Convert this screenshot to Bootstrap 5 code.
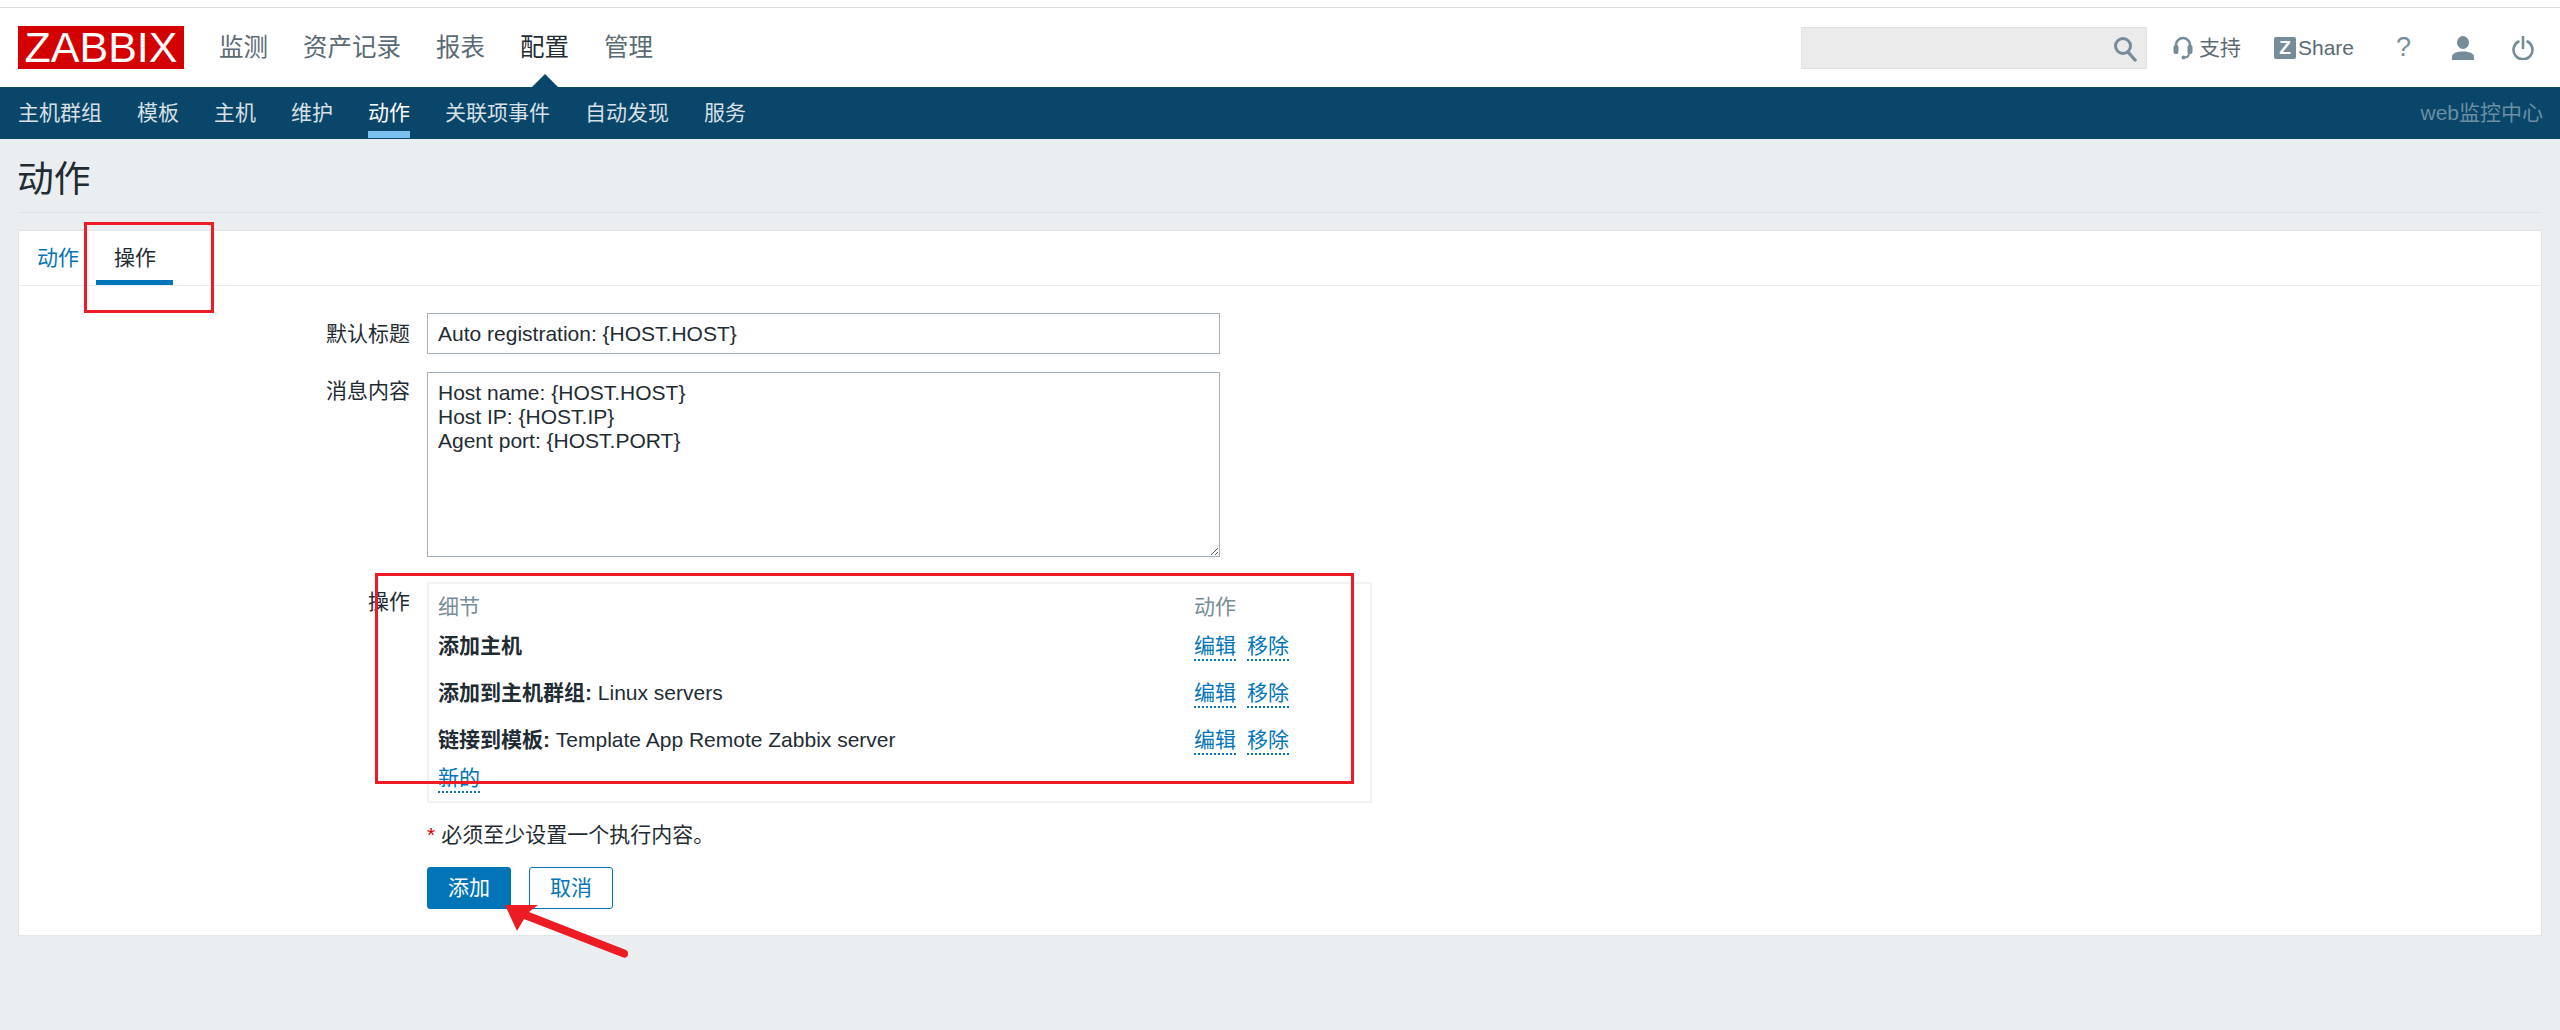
<!DOCTYPE html>
<html lang="zh-CN">
<head>
<meta charset="utf-8">
<title>动作</title>
<link href="https://cdn.jsdelivr.net/npm/bootstrap@5.3.0/dist/css/bootstrap.min.css" rel="stylesheet">
<style>
html,body{height:100%;}
body{background:#ebeef0;color:#1f2c33;font-family:"Liberation Sans","Noto Sans CJK SC",sans-serif;font-size:21px;line-height:24px;position:relative;overflow:hidden;}
a{text-decoration:none;color:#0275b8;}
.topline{height:8px;background:#fff;border-bottom:1px solid #ddd;}
.mainbar{height:79px;background:#fff;padding:18px 26px 0 18px;position:relative;}
.zlogo{width:166px;height:43px;background:#d40000;color:#fff;font-size:43px;line-height:43px;text-align:center;}
.mainnav{margin-left:35px;gap:35px;}
.mainnav a{font-size:24.5px;line-height:43px;color:#5b6b75;}
.mainnav a.cur{color:#1f2c33;}
.caret-up{position:absolute;left:532px;bottom:0;width:0;height:0;border-left:13px solid transparent;border-right:13px solid transparent;border-bottom:13px solid #0a466a;}
.searchbox{width:346px;height:42px;background:#ebebeb;border:1px solid #e2e2e2;position:relative;}
.searchbox svg{position:absolute;right:9px;top:8px;}
.tools{color:#5b6b75;height:43px;}
.tools span{line-height:43px;}
.t1{margin-left:26px;}
.t1 .g1{margin-left:6px;}
.t2{margin-left:33px;}
.t3{margin-left:42px;font-size:27px;width:12px;text-align:center;}
.t4{margin-left:44px;}
.t5{margin-left:38px;}
.tools .zmark{width:22px;height:22px;background:#768d99;color:#fff;border-radius:2px;font-size:19px;line-height:22px;font-weight:700;text-align:center;margin-right:2px;}
.subbar{height:52px;background:#0a466a;padding:0 17px 0 18px;}
.subnav{gap:35px;}
.subnav a{font-size:21px;height:52px;line-height:51px;color:#d6e0e6;position:relative;display:block;}
.subnav a.cur{color:#fff;}
.subnav a.cur::after{content:"";position:absolute;left:0;right:0;top:44px;height:7px;background:#7cc0f0;}
.brandtxt{color:#6b8ea3;line-height:51px;}
.titlebar{height:74px;margin:0 18px;border-bottom:1px solid #dfe3e6;}
.titlebar h1{font-size:36.75px;line-height:42px;font-weight:400;margin:0 0 0 -1px;padding-top:20px;color:#1f2c33;}
.panel{margin:17px 18px 0;height:706px;background:#fff;border:1px solid #e3e6e8;}
.tabstrip{height:55px;border-bottom:1px solid #ebeef0;padding-left:18px;gap:35px;}
.tabstrip a{height:54px;line-height:54px;display:block;position:relative;}
.tabstrip a.cur{color:#1f2c33;}
.tabstrip a.cur::after{content:"";position:absolute;left:-18px;right:-17px;top:49px;height:5px;background:#0275b8;}
.formarea{padding-top:27px;}
.frow{display:flex;}
.flabel{width:408px;text-align:right;padding-right:17px;flex:none;}
.fin{width:793px;height:41px;border:1px solid #a4b1b9;border-radius:0;font-size:21px;line-height:24px;padding:7px 10px;color:#1f2c33;font-family:inherit;box-shadow:none;}
.farea{height:185px;padding:8px 10px;resize:both;}
.opsbox{width:945px;height:221px;border:2px solid #f0f2f3;padding:11px 9px;}
.opstable{margin:0;width:100%;font-size:21px;}
.opstable td,.opstable th{padding:0;border:0;background:transparent;color:#1f2c33;font-weight:400;vertical-align:top;box-shadow:none;}
.opstable th{color:#768d99;height:39px;}
.opstable td{height:47px;}
.opstable b{font-weight:700;}
.colact{width:167px;}
.dotlink{border-bottom:2px dotted #0275b8;padding-bottom:1px;display:inline-block;line-height:24px;}
.dotlink + .dotlink{margin-left:11px;}
.notice{margin:20px 0 20px 408px;line-height:24px;}
.notice i{color:#d40000;font-style:normal;margin-right:6px;}
.btnrow{margin-left:408px;}
.zbtn{width:84px;height:42px;font-size:21px;line-height:24px;padding:8px 0;border-radius:3px;}
.zbtn-main{background:#0275b8;border:1px solid #0275b8;color:#fff;}
.zbtn-ghost{background:#fff;border:1px solid #0275b8;color:#0275b8;margin-left:18px;}
.redbox{position:absolute;border:3px solid #ed1c24;pointer-events:none;}
.rb1{left:84px;top:222px;width:130px;height:91px;}
.rb2{left:375px;top:573px;width:979px;height:211px;}
.redarrow{position:absolute;left:490px;top:890px;}
.g1{color:#5b6b75;}
.g2{color:#768d99;}
.gap18{margin-bottom:18px;}
.gap25{margin-bottom:25px;}
.lb41{line-height:41px;}
.pt7{padding-top:7px;}
.pt8{padding-top:8px;}
.opstable td.h38{height:38px;}
</style>
</head>
<body>
<div class="topline"></div>
<header class="mainbar d-flex justify-content-between">
  <div class="d-flex">
    <a class="zlogo d-block" href="#">ZABBIX</a>
    <nav class="mainnav d-flex">
      <a href="#">监测</a><a href="#">资产记录</a><a href="#">报表</a><a class="cur" href="#">配置</a><a href="#">管理</a>
    </nav>
  </div>
  <span class="caret-up"></span>
  <div class="tools d-flex align-items-center">
    <div class="searchbox">
      <svg width="24" height="26" viewBox="0 0 24 26"><circle cx="10" cy="10" r="7.5" fill="none" stroke="#768d99" stroke-width="3"/><path d="M15 16l7 8" stroke="#768d99" stroke-width="3.4" stroke-linecap="round"/></svg>
    </div>
    <a class="t1 d-flex align-items-center" href="#">
      <svg width="20" height="32" viewBox="0 0 20 32"><path d="M3 17v-4a7 7 0 0 1 14 0v4" fill="none" stroke="#768d99" stroke-width="2.6"/><rect x="0.5" y="13" width="5" height="9" rx="2" fill="#768d99"/><rect x="14.5" y="13" width="5" height="9" rx="2" fill="#768d99"/><path d="M16 21c0 3-2 4.500-5 4.500" fill="none" stroke="#768d99" stroke-width="2"/><circle cx="10.500" cy="25.500" r="2" fill="#768d99"/></svg>
      <span class="g1">支持</span>
    </a>
    <a class="t2 d-flex align-items-center" href="#">
      <span class="zmark d-block">Z</span><span class="g1">Share</span>
    </a>
    <a class="t3 d-block" href="#"><span class="g2">?</span></a>
    <a class="t4 d-flex" href="#">
      <svg width="22" height="24" viewBox="0 0 22 24"><ellipse cx="11" cy="6.500" rx="6" ry="6.500" fill="#768d99"/><path d="M0 24v-3c0-4 5-5.500 11-5.500s11 1.500 11 5.500v3z" fill="#768d99"/></svg>
    </a>
    <a class="t5 d-flex" href="#">
      <svg width="22" height="24" viewBox="0 0 22 24"><path d="M6.500 5.500a9.500 9.500 0 1 0 9 0" fill="none" stroke="#768d99" stroke-width="2.600" stroke-linecap="round"/><path d="M11 1v11" stroke="#768d99" stroke-width="2.600" stroke-linecap="round"/></svg>
    </a>
  </div>
</header>
<div class="subbar d-flex justify-content-between">
  <nav class="subnav d-flex">
    <a href="#">主机群组</a><a href="#">模板</a><a href="#">主机</a><a href="#">维护</a><a class="cur" href="#">动作</a><a href="#">关联项事件</a><a href="#">自动发现</a><a href="#">服务</a>
  </nav>
  <div class="brandtxt">web监控中心</div>
</div>
<div class="titlebar"><h1>动作</h1></div>
<main class="panel">
  <div class="tabstrip d-flex">
    <a href="#">动作</a><a class="cur" href="#">操作</a>
  </div>
  <form class="formarea">
    <div class="frow gap18">
      <label class="flabel lb41">默认标题</label>
      <input class="form-control fin" type="text" value="Auto registration: {HOST.HOST}">
    </div>
    <div class="frow gap25">
      <label class="flabel pt7">消息内容</label>
      <textarea class="form-control fin farea">Host name: {HOST.HOST}
Host IP: {HOST.IP}
Agent port: {HOST.PORT}</textarea>
    </div>
    <div class="frow">
      <label class="flabel pt8">操作</label>
      <div class="opsbox">
        <table class="table opstable">
          <thead><tr><th>细节</th><th class="colact">动作</th></tr></thead>
          <tbody>
            <tr><td><b>添加主机</b></td><td class="colact"><a class="dotlink" href="#">编辑</a><a class="dotlink" href="#">移除</a></td></tr>
            <tr><td><b>添加到主机群组:</b> Linux servers</td><td class="colact"><a class="dotlink" href="#">编辑</a><a class="dotlink" href="#">移除</a></td></tr>
            <tr><td class="h38"><b>链接到模板:</b> Template App Remote Zabbix server</td><td class="colact h38"><a class="dotlink" href="#">编辑</a><a class="dotlink" href="#">移除</a></td></tr>
            <tr><td colspan="2"><a class="dotlink" href="#">新的</a></td></tr>
          </tbody>
        </table>
      </div>
    </div>
    <div class="notice"><i>*</i>必须至少设置一个执行内容。</div>
    <div class="btnrow d-flex">
      <button type="button" class="btn zbtn zbtn-main">添加</button>
      <button type="button" class="btn zbtn zbtn-ghost">取消</button>
    </div>
  </form>
</main>
<div class="redbox rb1"></div>
<div class="redbox rb2"></div>
<svg class="redarrow" width="150" height="80" viewBox="0 0 150 80"><path d="M15 15h33l-9 7 97 38c4 2 2 10-4 7l-98-38-7 12z" fill="#ed1c24"/></svg>
<script src="https://cdn.jsdelivr.net/npm/bootstrap@5.3.0/dist/js/bootstrap.bundle.min.js"></script>
</body>
</html>
